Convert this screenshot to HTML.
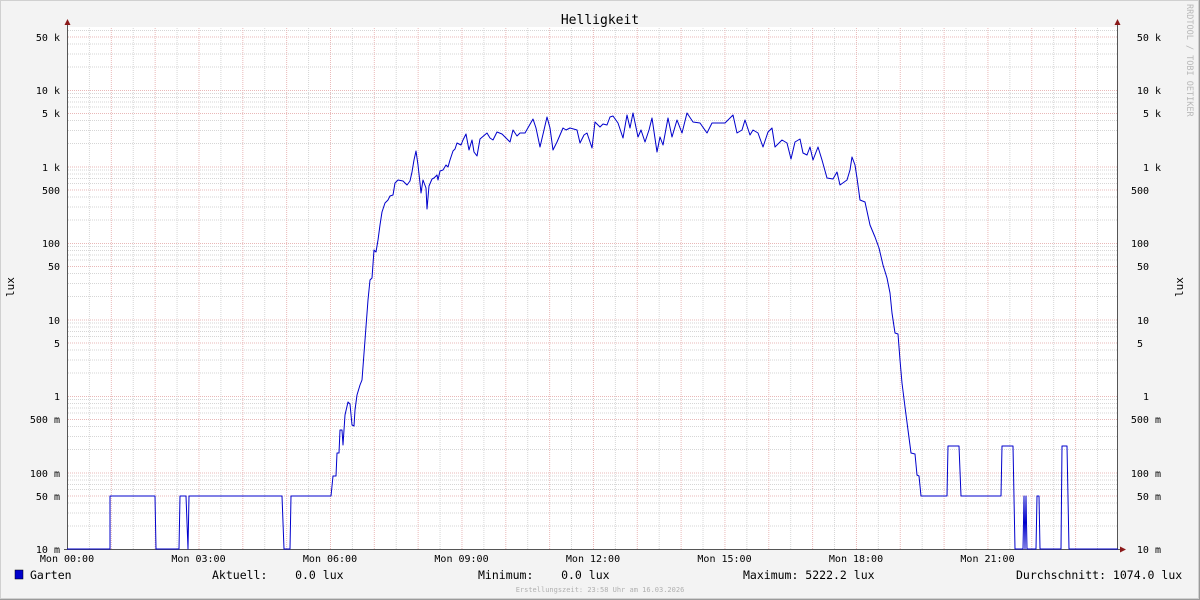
<!DOCTYPE html>
<html><head><meta charset="utf-8"><style>
html,body{margin:0;padding:0;background:#f3f3f3}
svg{display:block}
text{font-family:"DejaVu Sans Mono","Liberation Mono",monospace;fill:#000}
</style></head><body>
<svg width="1200" height="600" xmlns="http://www.w3.org/2000/svg">
<defs>
<pattern id="hg" patternUnits="userSpaceOnUse" x="0" y="13.5" width="10" height="76.5">
<g stroke-width="1" stroke-dasharray="1,1" fill="none">
<line x1="0" x2="10" y1="53.5" y2="53.5" stroke="#d6d6d6"/>
<line x1="0" x2="10" y1="40.5" y2="40.5" stroke="#d6d6d6"/>
<line x1="0" x2="10" y1="30.5" y2="30.5" stroke="#d6d6d6"/>
<line x1="0" x2="10" y1="23.5" y2="23.5" stroke="#e9b8b8"/>
<line x1="0" x2="10" y1="17" y2="17" stroke="#d6d6d6"/>
<line x1="0" x2="10" y1="12" y2="12" stroke="#d6d6d6"/>
<line x1="0" x2="10" y1="7.5" y2="7.5" stroke="#d6d6d6"/>
<line x1="0" x2="10" y1="3.5" y2="3.5" stroke="#d6d6d6"/>
<line x1="0" x2="10" y1="0.5" y2="0.5" stroke="#e9b8b8"/>
</g></pattern>
<pattern id="vg" patternUnits="userSpaceOnUse" x="67" y="0" width="43.83" height="10">
<line x1="22.4" x2="22.4" y1="0" y2="10" stroke="#d6d6d6" stroke-dasharray="1,1"/>
<line x1="0.5" x2="0.5" y1="0" y2="10" stroke="#e9b8b8" stroke-dasharray="1,1"/>
</pattern>
</defs>
<rect x="0" y="0" width="1200" height="600" fill="#f3f3f3"/>
<rect x="0.5" y="0.5" width="1198" height="598" fill="none" stroke="#d0d0d0"/>
<line x1="1199.5" y1="0" x2="1199.5" y2="600" stroke="#9a9a9a"/>
<line x1="0" y1="599.5" x2="1200" y2="599.5" stroke="#9a9a9a"/>
<rect x="67" y="27" width="1051" height="522" fill="#fff"/>
<rect x="67" y="27" width="1051" height="522" fill="url(#hg)"/>
<rect x="67" y="27" width="1051" height="522" fill="url(#vg)"/>
<text x="600" y="24" font-size="13" text-anchor="middle">Helligkeit</text>
<g font-size="10" text-anchor="end">
<text x="60" y="41">50 k</text><text x="60" y="94">10 k</text><text x="60" y="117">5 k</text>
<text x="60" y="171">1 k</text><text x="60" y="194">500</text><text x="60" y="247">100</text>
<text x="60" y="270">50</text><text x="60" y="324">10</text><text x="60" y="347">5</text>
<text x="60" y="400">1</text><text x="60" y="423">500 m</text><text x="60" y="477">100 m</text>
<text x="60" y="500">50 m</text><text x="60" y="553">10 m</text>
</g>
<g font-size="10" text-anchor="end">
<text x="1161" y="41">50 k</text><text x="1161" y="94">10 k</text><text x="1161" y="117">5 k</text>
<text x="1161" y="171">1 k</text><text x="1149" y="194">500</text><text x="1149" y="247">100</text>
<text x="1149" y="270">50</text><text x="1149" y="324">10</text><text x="1143" y="347">5</text>
<text x="1149" y="400">1</text><text x="1161" y="423">500 m</text><text x="1161" y="477">100 m</text>
<text x="1161" y="500">50 m</text><text x="1161" y="553">10 m</text>
</g>
<g font-size="10" text-anchor="middle">
<text x="67" y="562">Mon 00:00</text><text x="198.5" y="562">Mon 03:00</text><text x="330" y="562">Mon 06:00</text>
<text x="461.5" y="562">Mon 09:00</text><text x="593" y="562">Mon 12:00</text><text x="724.5" y="562">Mon 15:00</text>
<text x="856" y="562">Mon 18:00</text><text x="987.5" y="562">Mon 21:00</text>
</g>
<text font-size="11" transform="translate(14,287) rotate(-90)" text-anchor="middle">lux</text>
<text font-size="11" transform="translate(1183,287) rotate(-90)" text-anchor="middle">lux</text>
<text font-size="8.5" style="fill:#b8b8b8" transform="translate(1187,4) rotate(90)">RRDTOOL / TOBI OETIKER</text>
<g stroke="#555" stroke-width="1">
<line x1="67.5" y1="22" x2="67.5" y2="550"/>
<line x1="1117.5" y1="22" x2="1117.5" y2="550"/>
<line x1="64" y1="549.5" x2="1122" y2="549.5"/>
</g>
<polygon points="64.5,25 70.5,25 67.5,19" fill="#8b1a1a"/>
<polygon points="1114.5,25 1120.5,25 1117.5,19" fill="#8b1a1a"/>
<polygon points="1120,546.5 1120,552.5 1126,549.5" fill="#8b1a1a"/>
<path fill="none" stroke="#0000cc" stroke-width="1" stroke-linejoin="round" d="M67,549 L110,549 L110,496 L155,496 L156,549 L179,549 L180,496 L186,496 L188,549 L189,496 L282,496 L284,549 L290,549 L291,496 L331,496 L333,476 L336,476 L337,453 L339,453 L340,430 L342,430 L343,445 L345,415 L348,402 L350,404 L352,425 L354,426 L355,410 L357,395 L360,385 L362,380 L365,340 L368,300 L370,280 L372,278 L374,250 L376,252 L378,240 L380,225 L382,212 L385,203 L388,200 L390,196 L393,195 L395,183 L398,180 L403,181 L407,185 L410,181 L412,172 L414,160 L416,151 L418,165 L420,183 L421,193 L423,180 L426,188 L427,209 L429,186 L432,179 L434,178 L437,175 L438,180 L440,171 L443,170 L446,165 L448,167 L450,160 L453,151 L455,149 L457,143 L461,145 L463,140 L466,134 L469,150 L472,140 L474,152 L477,156 L480,139 L487,133 L490,138 L493,140 L497,132 L502,134 L506,138 L510,142 L513,130 L517,136 L520,133 L525,133 L529,126 L533,119 L536,128 L540,147 L544,130 L547,117 L550,128 L553,150 L557,142 L563,128 L566,130 L570,128 L577,130 L580,143 L584,135 L587,133 L592,148 L595,122 L600,127 L603,124 L607,125 L610,117 L613,116 L618,123 L623,138 L627,115 L630,128 L633,113 L638,137 L641,130 L645,142 L649,130 L652,118 L657,152 L660,137 L663,145 L668,118 L672,137 L677,120 L682,133 L687,113 L693,122 L700,123 L707,133 L712,123 L718,123 L725,123 L733,115 L737,133 L742,130 L745,120 L750,135 L753,130 L758,133 L763,147 L768,132 L772,128 L775,147 L782,140 L787,143 L791,159 L795,142 L800,139 L803,153 L807,155 L810,147 L813,160 L818,147 L822,160 L827,178 L833,179 L837,172 L840,185 L847,180 L850,170 L852,157 L855,165 L857,178 L860,200 L865,202 L870,225 L875,237 L879,248 L883,265 L887,278 L890,293 L892,313 L895,333 L898,334 L900,360 L902,383 L905,407 L908,430 L911,453 L915,454 L917,475 L919,476 L921,496 L947,496 L948,446 L959,446 L961,496 L1001,496 L1002,446 L1013,446 L1015,549 L1023,549 L1024,496 L1025,549 L1026,496 L1027,549 L1036,549 L1037,496 L1039,496 L1040,549 L1061,549 L1062,446 L1067,446 L1069,549 L1118,549"/>
<rect x="15" y="570" width="8" height="9" fill="#0000cc" stroke="#000" stroke-width="0.5"/>
<g font-size="11.5">
<text x="30" y="579">Garten</text>
<text x="212" y="579" xml:space="preserve">Aktuell:    0.0 lux</text>
<text x="478" y="579" xml:space="preserve">Minimum:    0.0 lux</text>
<text x="743" y="579" xml:space="preserve">Maximum: 5222.2 lux</text>
<text x="1016" y="579" xml:space="preserve">Durchschnitt: 1074.0 lux</text>
</g>
<text x="600" y="592" font-size="7" text-anchor="middle" style="fill:#b0b0b0">Erstellungszeit: 23:58 Uhr am 16.03.2026</text>
</svg>
</body></html>
